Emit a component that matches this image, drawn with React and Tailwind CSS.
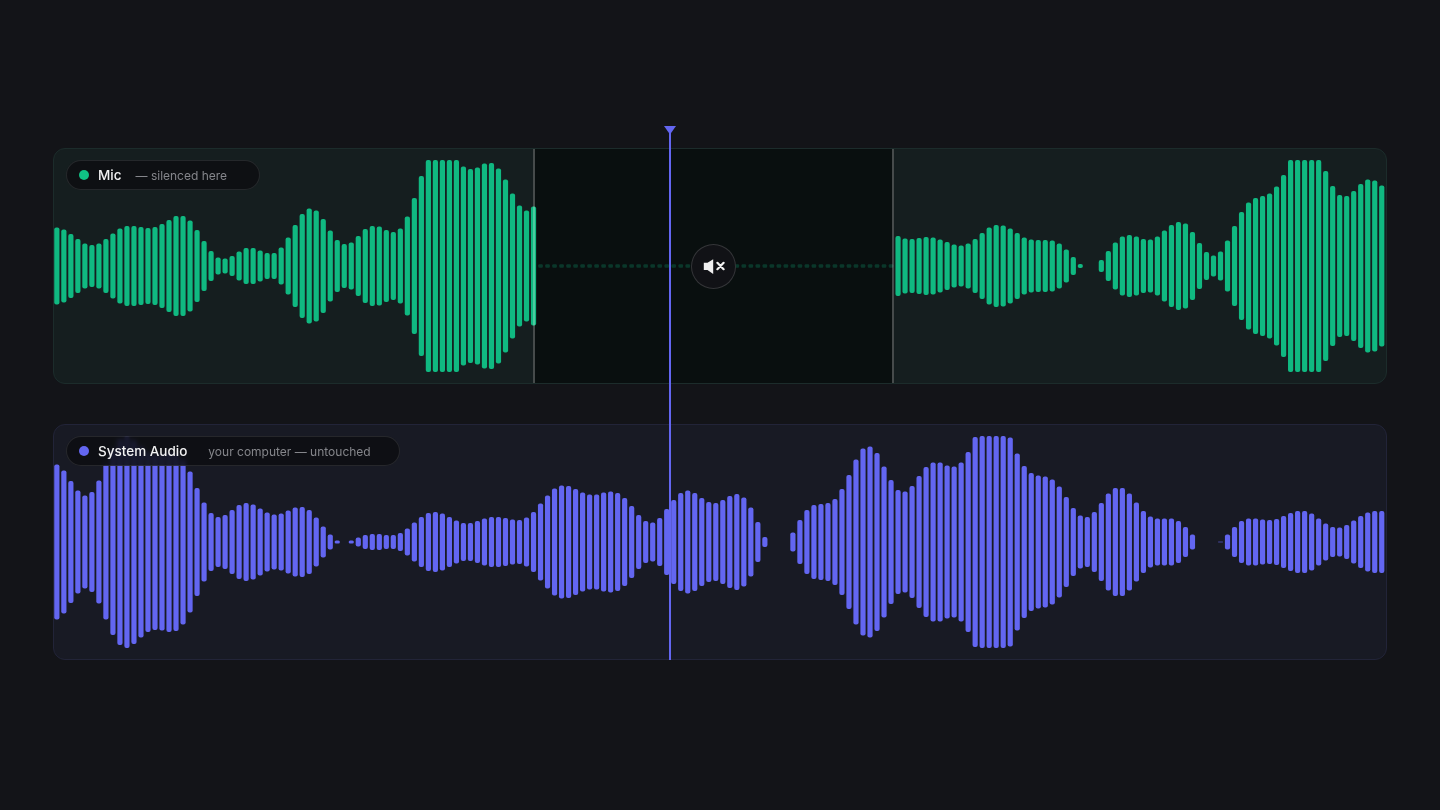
const micLeft = [77,73,64,54,45,42,45,54,65,75,80,80,78,76,78,84,92,100,100,91,72,50,30,17,15,20,29,36,36,31,26,26,37,57,82,104,115,111,94,71,52,44,47,60,74,80,79,72,68,75,99,136,180,212,212,212,212,212,199,194,197,205,206,195,173,145,121,111,119];
const micRight = [60,55,54,56,58,57,53,48,43,41,45,54,66,77,82,81,75,66,57,53,52,52,51,45,33,18,4,0,0,12,30,47,59,62,59,54,53,59,71,82,88,85,68,46,28,21,29,51,80,108,127,136,140,145,159,182,212,212,212,212,212,190,160,142,140,150,164,173,171,161];
const micMuted = new Array(51).fill(-1);
const micBars = [...micLeft, ...micMuted, ...micRight];

const sysBars = [155,143,122,103,93,100,123,155,186,206,212,204,191,180,176,177,180,178,165,141,108,79,58,50,54,64,74,78,75,67,59,55,57,63,69,70,64,49,31,15,3,0,3,9,14,16,16,14,14,18,27,39,50,58,60,57,50,43,38,38,42,47,50,50,48,45,44,49,60,77,93,107,113,112,106,99,95,95,99,101,98,88,72,54,42,39,48,66,84,98,103,98,88,80,78,84,92,96,89,69,40,10,0,0,0,19,44,64,74,76,78,86,106,134,165,187,191,178,151,124,104,101,112,132,150,159,159,153,151,159,180,210,212,212,212,212,209,177,152,138,133,131,125,111,90,68,53,50,60,78,97,108,108,97,79,62,51,47,47,47,42,30,15,0,0,0,-2,15,30,42,47,47,45,44,46,52,58,62,62,57,47,37,30,29,34,43,52,59,62,62];

const PITCH = 7.01;
const BAR = 5.2;
const OFFSET = 0.25;
const MID = 117;

function Wave({ bars, color }) {
  return (
    <svg width="1332" height="234" viewBox="0 0 1332 234" className="relative block">
      {bars.map((h, i) => {
        if (h === 0) return null;
        const x = i * PITCH + OFFSET;
        if (h === -1) {
          return <rect key={i} x={x + 0.3} y={MID - 1.75} width={4.6} height={3.5} rx={1} fill={color} opacity={0.24} />;
        }
        if (h === -2) {
          return <rect key={i} x={x} y={MID - 0.75} width={BAR} height={1.5} rx={0.75} fill={color} opacity={0.4} />;
        }
        return <rect key={i} x={x} y={MID - h / 2} width={BAR} height={h} rx={Math.min(2, h / 2)} fill={color} />;
      })}
    </svg>
  );
}

function Pill({ dotClass, name, note, widthClass, noteClass }) {
  return (
    <div
      className={`absolute left-3 top-[11px] z-10 flex h-[30px] items-center rounded-full border border-white/10 bg-[#0d0e12]/85 pl-[12px] backdrop-blur-[2px] ${widthClass}`}
    >
      <span className={`h-[10px] w-[10px] shrink-0 rounded-full ${dotClass}`} />
      <span className="ml-[9px] pt-[2px] text-[13.5px] font-medium leading-none text-[#f2f2f3]">{name}</span>
      <span className={`pt-[2px] text-[12px] leading-none text-[#85868b] ${noteClass}`}>{note}</span>
    </div>
  );
}

function MuteIcon() {
  return (
    <svg width="22" height="22" viewBox="0 0 22 22" fill="none">
      <polygon points="0.8,7.7 4.5,7.7 10.2,4.3 10.2,19 4.5,15 0.8,15" fill="#f1f1f1" />
      <path d="M14.4 7.8L20.6 14.2M20.6 7.8L14.4 14.2" stroke="#f1f1f1" strokeWidth="2.2" strokeLinecap="round" />
    </svg>
  );
}

export default function App() {
  return (
    <div className="h-[810px] w-[1440px] overflow-hidden bg-[#131418] px-[53px] pt-[148px] font-['Inter','Liberation_Sans',sans-serif]">
      <div className="relative flex flex-col gap-10">
        <div className="relative h-[236px] rounded-[12px] border border-[#1c2c2b] bg-[#151e1f]">
          <div className="absolute inset-y-0 left-[479px] w-[361px] bg-[#090f0f]" />
          <Wave bars={micBars} color="#10b981" />
          <div className="absolute inset-y-0 left-[479px] flex w-[361px] items-center justify-center border-x-2 border-white/25">
            <div className="flex h-[45px] w-[45px] items-center justify-center rounded-full border border-white/15 bg-[#111216]">
              <MuteIcon />
            </div>
          </div>
          <Pill dotClass="bg-[#10c285]" name="Mic" note="— silenced here" widthClass="w-[194px]" noteClass="ml-[14px]" />
        </div>

        <div className="relative h-[236px] rounded-[12px] border border-[#222438] bg-[#181a24]">
          <Wave bars={sysBars} color="#6366f1" />
          <Pill dotClass="bg-[#6366f1]" name="System Audio" note="your computer — untouched" widthClass="w-[334px]" noteClass="ml-[21px]" />
        </div>

        <div className="absolute left-[610px] top-[-22px] z-20 flex w-[14px] flex-col items-center">
          <svg width="14" height="9" viewBox="0 0 14 9" className="shrink-0">
            <polygon points="1,0 13,0 7,8.5" fill="#6366f1" />
          </svg>
          <div className="-mt-[5px] h-[530px] w-[2px] bg-[#6366f1]" />
        </div>
      </div>
    </div>
  );
}
